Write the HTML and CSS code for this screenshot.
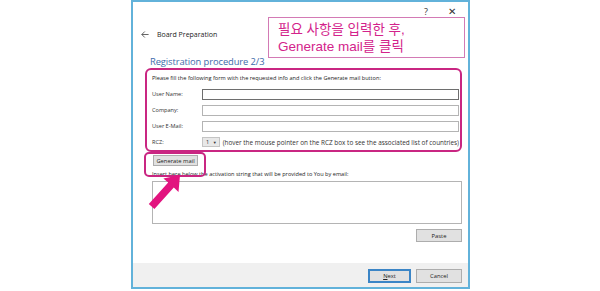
FILE: index.html
```html
<!DOCTYPE html>
<html lang="ko">
<head>
    <meta charset="UTF-8">
    <meta name="viewport" content="width=device-width, initial-scale=1.0">
    <title>Board Preparation</title>
    <link rel="stylesheet" href="styles.css">
</head>
<body>

    <div class="window">
        <div class="titlebar">
            <span class="help">?</span>
            <span class="close">✕</span>
        </div>

        <div class="nav">
            <svg class="back" width="8" height="7" viewBox="0 0 8 7">
                <path d="M0.8,3.5 H7.6 M3.8,0.5 L0.8,3.5 L3.8,6.5" fill="none" stroke="#555" stroke-width="0.9"/>
            </svg>
            <span class="nav-title">Board Preparation</span>
        </div>

        <div class="content">
            <h1 class="heading">Registration procedure 2/3</h1>

            <!-- Datos del usuario -->
            <div class="form-box">
                <p class="note">Please fill the following form with the requested info and click the Generate mail button:</p>
                <div class="row">
                    <span class="label">User Name:</span>
                    <div class="input focused"></div>
                </div>
                <div class="row">
                    <span class="label">Company:</span>
                    <div class="input"></div>
                </div>
                <div class="row">
                    <span class="label">User E-Mail:</span>
                    <div class="input"></div>
                </div>
                <div class="row">
                    <span class="label">RCZ:</span>
                    <div class="select">1 <span class="caret">▼</span></div>
                    <span class="hint">(hover the mouse pointer on the RCZ box to see the associated list of countries)</span>
                </div>
            </div>

            <div class="gen-row">
                <button class="btn gen">Generate mail</button>
            </div>

            <p class="note insert">Insert here below the activation string that will be provided to You by email:</p>
            <div class="textarea"></div>

            <div class="paste-row">
                <button class="btn paste">Paste</button>
            </div>
        </div>

        <div class="footer">
            <button class="btn next"><u>N</u>ext</button>
            <button class="btn cancel">Cancel</button>
        </div>

        <!-- Anotación -->
        <div class="callout">필요 사항을 입력한 후,<br>Generate mail를 클릭</div>
        <svg class="arrow" width="45" height="45" viewBox="0 0 45 45">
            <polygon points="38,4 36.5,21 31.8,16.6 12.4,38 6.8,33 26.2,11.6 21.4,7.4" fill="#e2147f"/>
        </svg>
    </div>

</body>
</html>
```

FILE: styles.css
```css
body {
    margin: 0;
    padding: 0;
    background-color: #fff;
    font-family: 'Open Sans', 'Noto Sans', sans-serif;
}

.window {
    position: relative;
    box-sizing: border-box;
    width: 339px;
    height: 289px;
    margin-left: 131px;
    border: 2px solid #62b2da;
    background-color: #fff;
    display: flex;
    flex-direction: column;
}

.titlebar {
    height: 18px;
    display: flex;
    align-items: center;
    justify-content: flex-end;
    gap: 20px;
    padding-right: 12px;
    font-size: 9px;
    color: #333;
}

.titlebar .close {
    font-size: 10px;
}

.nav {
    height: 28px;
    display: flex;
    align-items: center;
    padding-left: 8px;
    font-size: 7px;
    color: #222;
}

.back {
    margin-right: 8px;
}

.content {
    flex: 1;
    display: flex;
    flex-direction: column;
    padding: 0 6px 0 12px;
}

.heading {
    margin: 8px 0 0 5px;
    height: 12px;
    line-height: 12px;
    font-size: 9.4px;
    letter-spacing: -0.1px;
    font-weight: normal;
    color: #3d6cab;
}

.form-box {
    height: 77px;
    border: 2px solid #c92682;
    border-radius: 6px;
    padding: 3px 1px 0 5px;
    display: flex;
    flex-direction: column;
    gap: 6px;
}

.note {
    margin: 0;
    height: 10px;
    line-height: 10px;
    font-size: 5.6px;
    color: #222;
    white-space: nowrap;
}

.row {
    display: flex;
    align-items: center;
    height: 10px;
    font-size: 5.6px;
    color: #333;
}

.label {
    width: 50px;
    flex-shrink: 0;
}

.input {
    flex: 1;
    box-sizing: border-box;
    height: 11px;
    border: 1px solid #b4b4b4;
    background-color: #fff;
}

.input.focused {
    border-color: #6e6e6e;
}

.select {
    box-sizing: border-box;
    width: 20px;
    height: 10px;
    line-height: 8px;
    padding-left: 3px;
    border: 1px solid #c4c4c4;
    background-color: #e8e8e8;
    font-size: 5.6px;
}

.caret {
    font-size: 4px;
    margin-left: 2px;
}

.hint {
    margin-left: 3px;
    font-size: 6.4px;
    white-space: nowrap;
}

.btn {
    box-sizing: border-box;
    margin: 0;
    padding: 0;
    border: 1px solid #adadad;
    background-color: #e1e1e1;
    font-family: inherit;
    font-size: 5.8px;
    color: #222;
}

.gen-row {
    display: flex;
    margin: 3px 0 0 8px;
}

.gen {
    position: relative;
    width: 45px;
    height: 11px;
}

/* Recuadro rosa del botón */
.gen::after {
    content: "";
    position: absolute;
    left: -10px;
    top: -4px;
    width: 58px;
    height: 21px;
    border: 2px solid #c92682;
    border-radius: 5px;
}

.insert {
    margin: 4px 0 0 7px;
    height: 8px;
    line-height: 8px;
}

.textarea {
    margin: 3px 0 0 7px;
    height: 43px;
    box-sizing: border-box;
    border: 1px solid #b4b4b4;
    background-color: #fff;
}

.paste-row {
    display: flex;
    justify-content: flex-end;
    margin-top: 5px;
}

.paste {
    width: 46px;
    height: 13px;
}

.footer {
    height: 24px;
    box-sizing: border-box;
    background-color: #f0f0f0;
    display: flex;
    justify-content: flex-end;
    gap: 5px;
    padding: 6px 6px 0 0;
}

.next {
    width: 43px;
    height: 14px;
    border: 2px solid #3b85c6;
}

.cancel {
    width: 46px;
    height: 14px;
}

.callout {
    position: absolute;
    left: 135px;
    top: 15px;
    width: 197px;
    height: 41px;
    box-sizing: border-box;
    padding: 3px 0 0 9px;
    border: 1px solid #d37ab5;
    background-color: #fff;
    font-family: 'Liberation Sans', 'Noto Sans CJK KR', sans-serif;
    font-size: 13.5px;
    line-height: 17px;
    color: #d3238b;
}

.arrow {
    position: absolute;
    left: 9px;
    top: 169px;
}
```
